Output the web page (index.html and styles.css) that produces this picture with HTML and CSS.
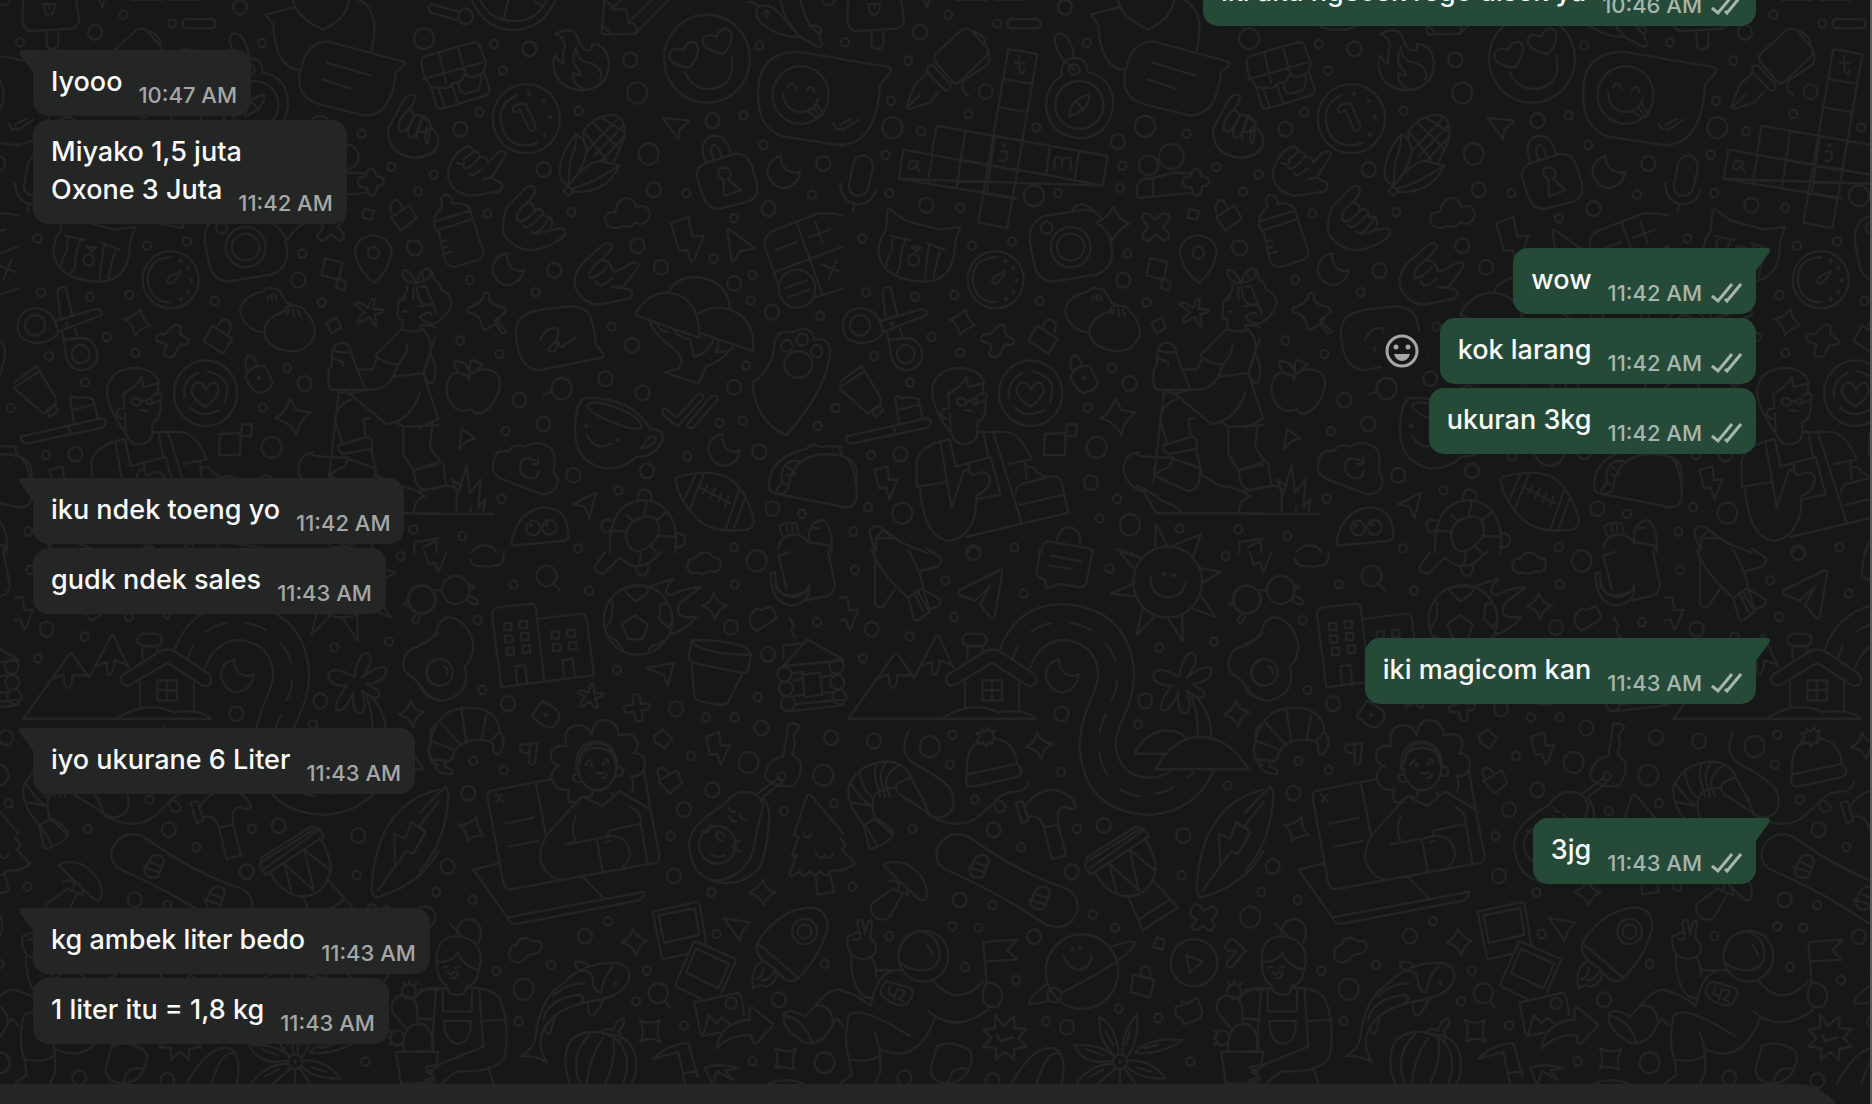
FILE: index.html
```html
<!DOCTYPE html>
<html lang="jv">
  <head>
    <meta charset="UTF-8" />
    <meta name="viewport" content="width=device-width, initial-scale=1.0" />
    <title>Chat</title>
    <link rel="stylesheet" href="styles.css">
  </head>
  <body>
    <svg class="wallpaper" aria-hidden="true">
      <defs>
        <!-- one wallpaper tile, 825px wide, drawn in four quarters -->
        <g id="tile">
          <g transform="translate(420 0) scale(.3333 .352)">
            <circle class="s" cx="222" cy="125"/><circle class="s" cx="249" cy="200"/><circle class="s" cx="178" cy="319"/><circle class="s" cx="476" cy="315"/><circle class="s" cx="41" cy="496"/><circle class="s" cx="202" cy="607"/><circle class="s" cx="454" cy="603"/><circle class="s" cx="150" cy="795"/><circle class="s" cx="347" cy="830"/><circle class="s" cx="575" cy="928"/><circle class="s" cx="121" cy="967"/><circle class="s" cx="238" cy="1006"/><circle class="s" cx="257" cy="1225"/><circle class="s" cx="595" cy="1393"/><circle class="s" cx="245" cy="1417"/><circle class="s" cx="127" cy="1523"/><circle class="s" cx="802" cy="1297"/><circle class="s" cx="899" cy="1201"/><circle class="s" cx="969" cy="1195"/><circle class="s" cx="978" cy="1039"/><circle class="s" cx="992" cy="854"/><circle class="s" cx="998" cy="781"/><circle class="s" cx="881" cy="735"/><circle class="s" cx="942" cy="620"/><circle class="s" cx="799" cy="549"/><circle class="s" cx="1018" cy="130"/><circle class="s" cx="971" cy="328"/><circle class="s" cx="1030" cy="412"/><circle class="s" cx="1176" cy="553"/><circle class="s" cx="1201" cy="897"/><circle class="s" cx="1193" cy="1210"/><circle class="s" cx="1247" cy="1159"/><circle class="s" cx="1146" cy="1460"/><circle class="s" cx="942" cy="1555"/><circle class="s" cx="474" cy="1558"/>
            <circle class="m" cx="328" cy="139"/><circle class="m" cx="631" cy="170"/><circle class="m" cx="121" cy="367"/><circle class="m" cx="371" cy="482"/><circle class="m" cx="878" cy="343"/><circle class="m" cx="701" cy="539"/><circle class="m" cx="652" cy="698"/><circle class="m" cx="723" cy="759"/><circle class="m" cx="403" cy="768"/><circle class="m" cx="1046" cy="593"/><circle class="m" cx="1210" cy="464"/><circle class="m" cx="942" cy="805"/><circle class="m" cx="1056" cy="887"/><circle class="m" cx="636" cy="981"/><circle class="m" cx="556" cy="1076"/><circle class="m" cx="668" cy="1116"/><circle class="m" cx="942" cy="1100"/><circle class="m" cx="298" cy="1137"/><circle class="m" cx="370" cy="1204"/><circle class="m" cx="460" cy="1350"/><circle class="m" cx="681" cy="1338"/><circle class="m" cx="1018" cy="1283"/><circle class="m" cx="1057" cy="1445"/><circle class="m" cx="1225" cy="-6"/>
            <circle class="l" cx="652" cy="264"/><circle class="l" cx="686" cy="437"/><circle class="l" cx="425" cy="1104"/><circle class="l" cx="12" cy="110"/>
            <!-- scooter wheel, pencil, chilli -->
            <path d="M150-10Q190 85 280 85T412-10M175-10Q205 58 280 60T385-10M265 0L250 55M35 12L120 34M32 36L115 58M35 12Q18 20 32 36M345 5L370 18"/><ellipse cx="137" cy="47" rx="22" ry="22"/>
            <path d="M553 0L545 88Q545 98 556 98L645 96L750-5M645 96Q655 80 640 66Q622 70 622 55Q630 25 600 25Q575 35 575 15L553 0M625 65L700-5M548 72L572 95M580 22L602 0"/>
            <path d="M985 5Q1005 5 1015 20Q1050 5 1080 40L1140 105Q1070 105 1025 65Q1000 45 1015 20M1030 40q8-15 18-5q-12 10-8 18M1082-5Q1085 50 1140 105L1195 133Q1207 135 1205 122L1197 98Q1150 60 1142-5M1165 72Q1200 70 1204 86Q1200 98 1190 92"/>
            <!-- gift basket, flame, clock -->
            <path d="M20 158L160 120Q180 120 180 135L198 178Q195 210 170 215Q150 225 135 210Q125 240 100 235Q85 255 65 248Q35 255 25 235Q5 210 5 175Q5 162 20 158M10 225L195 175M58 152L78 235M115 138L138 212M35 250L48 298Q55 312 70 308L195 272Q210 268 208 250L192 205M55 252L75 306M95 238L115 295M115 235Q118 270 140 265L170 258Q185 250 182 215"/>
            <path d="M405 97Q460 70 475 110Q485 145 508 143Q520 140 515 125Q560 125 567 180Q565 250 485 257Q405 250 400 180Q402 160 408 158Q412 175 432 180Q425 160 435 130Q430 100 405 97ZM468 135Q470 175 515 180Q555 200 540 225M468 135Q450 170 468 190Q482 205 482 213Q470 215 460 207Q455 240 495 255"/>
            <ellipse cx="319" cy="337" rx="101" ry="98"/><path d="M290 270Q240 290 242 340Q250 415 322 413Q340 412 353 405M280 318Q275 300 295 297Q315 290 320 300L346 355Q345 375 330 372L300 312Q290 322 280 318"/><circle class="dot" cx="327" cy="266"/><circle class="dot" cx="371" cy="287"/><circle class="dot" cx="391" cy="333"/><circle class="dot" cx="375" cy="383"/>
            <!-- heart eyes -->
            <ellipse cx="861" cy="167" rx="129" ry="125"/><path d="M935 160Q950 240 875 253Q815 255 795 205M810 192Q750 185 748 160Q750 130 790 142Q800 115 825 120Q850 140 810 192ZM910 154Q850 140 848 118Q850 90 890 105Q900 75 925 82Q950 110 910 154Z"/>
            <!-- laughing bubble -->
            <path d="M1270 168L1140 148Q1030 145 1017 235Q1000 360 1090 388L1270 414M1240 350L1252 368L1265 365"/><ellipse cx="1142" cy="270" rx="84" ry="82"/><path d="M1090 262Q1092 315 1140 318Q1185 318 1193 280M1104 248Q1115 225 1130 252M1160 258Q1175 235 1183 262M1168 318Q1195 345 1210 325L1190 295M1180 305L1195 325"/>
            <!-- corn -->
            <path d="M500 420Q485 390 492 370Q515 340 550 330Q590 320 605 340Q620 370 610 400L582 458M468 382Q415 440 420 500Q425 520 445 528Q500 470 500 420Q490 390 468 382ZM468 382Q470 420 450 460L445 528M445 528Q500 460 540 457L598 470Q560 550 460 545L445 528M460 535Q520 520 598 470M430 543L445 528L460 543L447 557ZM492 375L560 455M520 350L600 425M545 335L612 375M500 430L590 340M520 445L612 355M545 457L610 390"/>
            <!-- hands -->
            <path d="M205 462L235 432Q255 425 258 440L215 505L245 520Q250 540 235 545L150 556Q85 545 83 490Q95 440 135 418Q155 410 160 430Q180 430 180 445Q200 445 205 462M110 462Q140 475 130 455L160 430M130 475Q140 490 180 445M148 490Q150 510 188 478M215 505L190 508"/>
            <path d="M318 578Q345 560 345 535Q335 520 315 535L260 590Q240 650 255 670Q290 715 345 710Q400 700 435 668Q440 650 420 648L388 655Q405 630 388 615Q370 620 370 605Q360 585 345 600Q340 570 318 578Q290 600 290 620Q300 645 345 600M310 640Q320 660 370 605M335 655Q345 680 388 620M345 665L390 655"/>
            <path d="M540 740Q570 715 577 700Q570 685 550 695L485 750Q455 790 468 820Q490 865 540 865L630 848Q645 830 630 822L575 815L610 815L650 765Q665 745 640 745L590 770Q575 775 575 760Q565 735 540 740Q500 770 510 790Q530 790 560 760M528 800Q540 825 575 790"/>
            <path d="M0 330Q20 325 15 340Q35 340 32 365Q55 375 55 405Q50 435 0 448M0 375Q15 380 20 360M20 408Q10 390 22 370L32 368"/>
            <!-- bottle, moons, pin, cloud -->
            <path d="M65 590Q70 580 62 570Q65 550 85 555Q95 560 98 578Q140 575 150 595L158 622L50 655Q40 640 42 630Q45 605 65 590M48 628L152 598M55 655L75 740Q85 760 105 758L175 738Q190 732 190 715L158 622M62 687L80 683M65 703L82 700M70 722L97 715"/>
            <path d="M262 720Q220 725 218 770Q230 810 270 810Q305 800 312 768Q285 775 270 755Q258 740 262 720ZM1083 442Q1040 455 1043 495Q1060 535 1095 535Q1135 525 1141 488Q1120 495 1100 482Q1078 465 1083 442ZM908 1233Q865 1240 865 1280Q880 1325 920 1323Q955 1315 960 1280Q930 1290 915 1270Q905 1255 908 1233Z"/>
            <path d="M192 835Q205 825 208 840Q200 860 240 870Q260 875 257 887L225 910L260 942Q255 950 245 945L225 920L200 935Q190 942 187 930Q180 890 145 888Q140 880 145 875Q190 860 192 835M238 908L225 918"/>
            <path d="M585 603Q595 560 625 563Q648 570 648 590Q685 575 690 610Q680 645 645 632Q630 650 610 642Q560 660 555 620Q560 600 585 603Z"/>
            <!-- padlock -->
            <path d="M858 463Q825 475 833 510L850 560Q865 598 905 592L985 572Q1020 560 1010 520L995 470Q980 435 945 437ZM858 463Q830 400 880 385Q920 385 933 438M882 458Q865 415 885 412Q895 412 905 448M910 510Q885 495 900 478Q925 470 933 492Q930 508 922 508L962 540L912 557L910 510"/>
            <!-- bolt, cursors -->
            <path d="M753 635L805 616L817 673L852 668L822 740Q815 750 812 740L802 710L777 712ZM922 655Q925 648 932 655L1007 706L962 712L940 742Q935 748 935 740ZM728 335L805 342Q810 348 800 350L777 370L775 395ZM460 1432L528 1400L508 1472L495 1440ZM126 1218L165 1245L138 1255L117 1275Z"/>
            <!-- calculator -->
            <path d="M1270 612Q1200 600 1185 610L1060 655Q1030 670 1035 700L1075 810M1130 632L1208 838M1067 772L1270 700M1068 710L1130 687M1165 675L1230 652M1187 632L1208 692M1205 752L1260 772M1250 738L1225 795M1185 845L1270 820M1097 818L1160 797M1107 844L1168 823"/><ellipse cx="1131" cy="820" rx="55" ry="54"/>
            <!-- gnome hat -->
            <path d="M0 870L35 865M0 815L18 813L50 890M0 900Q30 880 35 895M10 790Q0 770 20 763Q40 765 42 795Q60 800 62 822Q95 835 95 865Q80 905 40 920Q15 920 0 900M0 930Q35 950 32 1000L10 1060L55 1190L0 1215M32 1005Q55 1050 40 1085Q30 1090 20 1080M37 1205L30 1270L60 1310L0 1330M60 1310Q75 1315 73 1345L80 1380L0 1395M80 1380Q110 1380 110 1400V1458M0 1460H220M140 1320L115 1400L95 1362L125 1380M140 1320L150 1400L182 1362L175 1440L197 1415L190 1455M152 1440V1458"/>
            <!-- number bubble, mushroom -->
            <path d="M450 870Q330 880 310 897Q280 920 290 970Q300 1050 360 1052L545 1016Q555 1010 545 1000L528 980Q520 900 500 885Q480 870 450 870M360 965Q380 925 412 933Q425 960 385 990Q390 1005 405 995Q425 970 410 970Q395 975 430 985L440 975L467 960"/>
            <path d="M645 895Q680 830 745 832Q840 840 838 960L645 895M745 832Q770 785 830 787Q920 795 930 875M838 890Q870 870 910 875Q1005 890 1000 998L838 945M690 915Q700 945 760 990Q800 1020 775 1048L735 1058L835 1090L860 1040Q900 1030 940 985M760 935Q770 955 810 965L822 1015Q870 1000 882 962M712 920Q720 945 745 942M888 1000Q895 985 895 968M888 1000Q930 1000 940 985"/>
            <!-- paw -->
            <path d="M998 1085Q1060 1050 1065 970Q1075 935 1115 945Q1130 935 1160 935Q1185 945 1180 965Q1240 955 1228 1020Q1210 1120 1098 1237Q1000 1190 998 1085"/><ellipse cx="1135" cy="1035" rx="42" ry="38"/><circle class="p" cx="1147" cy="965"/><circle class="p" cx="1100" cy="983"/><circle class="p" cx="1190" cy="998"/>
            <!-- apple, cup, ticks -->
            <path d="M145 1080L150 1062Q190 1040 220 1055Q250 1070 235 1115Q215 1165 180 1175Q160 1175 155 1163Q140 1168 120 1167Q80 1150 80 1100Q85 1060 115 1058Q140 1060 150 1075M150 1065Q140 1020 102 1027Q105 1065 145 1068M150 1055Q145 1025 160 1023L188 1035L160 1060M370 1122L395 1113"/>
            <path d="M470 1170Q480 1130 500 1130Q640 1130 690 1220Q730 1215 728 1250Q705 1300 650 1297Q610 1335 550 1330Q460 1310 465 1210ZM502 1150Q520 1135 580 1155Q660 1180 667 1215Q640 1225 580 1200Q500 1170 502 1150M500 1235Q525 1285 575 1260M690 1240L708 1243Q700 1270 662 1275ZM728 1165Q740 1155 745 1168L770 1185L835 1120Q850 1115 850 1130L775 1210Q765 1210 728 1175ZM802 1205L875 1125Q895 1120 893 1135L820 1215Q805 1220 802 1205"/><circle class="dot" cx="499" cy="1210"/><circle class="dot" cx="592" cy="1250"/>
            <!-- cloud sync, ghost, turtle -->
            <path d="M232 1286Q215 1310 220 1340Q230 1355 250 1363L370 1405Q410 1400 413 1370Q412 1350 400 1340Q410 1300 395 1275Q355 1245 315 1270Q280 1255 268 1282Q245 1280 232 1286M345 1308Q300 1290 300 1332Q310 1365 345 1358Q355 1350 357 1338M355 1300V1318H338M280 1550Q270 1550 278 1525Q300 1450 370 1442Q445 1440 445 1525Q445 1535 430 1537ZM10 1555L48 1535L50 1570M155 1568Q180 1545 195 1550Q220 1548 228 1570"/><circle class="m" cx="339" cy="1500"/><circle class="m" cx="388" cy="1498"/><circle class="dot" cx="332" cy="1493"/><circle class="dot" cx="380" cy="1490"/>
            <path d="M570 1570Q565 1450 640 1425Q700 1410 740 1450Q780 1500 765 1570M655 1425Q650 1390 675 1390Q700 1395 693 1425M572 1478Q540 1470 545 1500Q555 1520 572 1508M765 1515Q800 1515 795 1540Q785 1560 765 1552M618 1520Q620 1490 650 1475Q690 1460 708 1475Q725 1500 710 1530Q680 1565 650 1567Q620 1560 618 1520M640 1482L620 1462M672 1465L680 1425M708 1480L740 1455M718 1523L765 1525M690 1550L710 1570M618 1510L570 1507"/>
            <!-- football, taco -->
            <path d="M768 1370Q765 1355 780 1353Q880 1330 930 1360Q985 1400 1002 1480Q1000 1500 980 1505Q880 1515 840 1480Q780 1430 768 1370M825 1352L790 1425M852 1345L808 1450M958 1390L915 1508M975 1415L940 1505M840 1385L930 1430M862 1380L850 1400M885 1388L870 1415M905 1400L895 1425M925 1412L915 1440"/>
            <path d="M1048 1390Q1040 1300 1160 1275Q1180 1255 1200 1270Q1230 1265 1265 1270M1270 1295Q1120 1270 1105 1385Q1100 1400 1080 1403Q1055 1405 1048 1390M1270 1440L1080 1405M1140 1310Q1080 1300 1085 1370L1105 1380M1100 1325Q1125 1340 1125 1350M1100 1350h15M1068 1395L1085 1372M1075 1560Q1080 1525 1110 1520Q1150 1515 1168 1545M1085 1520L1078 1495Q1100 1480 1130 1487L1135 1515M1098 1487L1103 1512M1115 1485L1118 1512M1168 1545Q1160 1480 1210 1477Q1240 1500 1235 1570M1168 1540L1230 1550L1225 1570M1180 1500h20"/>
          </g>

          <g transform="translate(840 0) scale(.3333 .352)">
            <circle class="s" cx="325" cy="42"/><circle class="s" cx="472" cy="67"/><circle class="s" cx="205" cy="172"/><circle class="s" cx="741" cy="122"/><circle class="s" cx="15" cy="120"/><circle class="s" cx="153" cy="286"/><circle class="s" cx="385" cy="324"/><circle class="s" cx="243" cy="373"/><circle class="s" cx="589" cy="362"/><circle class="s" cx="137" cy="440"/><circle class="s" cx="148" cy="548"/><circle class="s" cx="361" cy="590"/><circle class="s" cx="654" cy="548"/><circle class="s" cx="840" cy="534"/><circle class="s" cx="847" cy="471"/><circle class="s" cx="1040" cy="380"/><circle class="s" cx="1129" cy="474"/><circle class="s" cx="1209" cy="544"/><circle class="s" cx="516" cy="686"/><circle class="s" cx="396" cy="698"/><circle class="s" cx="67" cy="677"/><circle class="s" cx="862" cy="721"/><circle class="s" cx="343" cy="838"/><circle class="s" cx="599" cy="855"/><circle class="s" cx="920" cy="859"/><circle class="s" cx="225" cy="843"/><circle class="s" cx="78" cy="831"/><circle class="s" cx="275" cy="957"/><circle class="s" cx="361" cy="1002"/><circle class="s" cx="102" cy="1012"/><circle class="s" cx="210" cy="1086"/><circle class="s" cx="816" cy="1045"/><circle class="s" cx="743" cy="1158"/><circle class="s" cx="93" cy="1293"/><circle class="s" cx="831" cy="1417"/><circle class="s" cx="84" cy="1441"/><circle class="s" cx="779" cy="1473"/><circle class="s" cx="1019" cy="1502"/><circle class="s" cx="1195" cy="1504"/><circle class="s" cx="40" cy="1510"/><circle class="s" cx="523" cy="1555"/>
            <circle class="m" cx="240" cy="92"/><circle class="m" cx="437" cy="260"/><circle class="m" cx="834" cy="402"/><circle class="m" cx="675" cy="20"/><circle class="m" cx="259" cy="583"/><circle class="m" cx="850" cy="796"/><circle class="m" cx="869" cy="1089"/><circle class="m" cx="181" cy="1290"/><circle class="m" cx="753" cy="1371"/>
            <circle class="l" cx="157" cy="363"/><circle class="l" cx="915" cy="359"/><circle class="l" cx="582" cy="556"/><circle class="l" cx="770" cy="1271"/><circle class="l" cx="187" cy="1458"/><circle class="l" cx="870" cy="1491"/>
            <!-- lolly, pen -->
            <path d="M25-5L22 55Q25 90 55 88L160 82Q195 80 192 50L182-5M95 88V130Q110 150 130 130V85M82 12L122 10M88 12Q85 42 103 42Q120 40 118 12M103 15V25M250-5L262 22L268-5M350 0H440M465 0H555M512 54H590Q602 58 602 68Q600 80 590 80H512Q503 78 503 67Q503 56 512 54"/>
            <path d="M290 150L365 85Q380 75 395 88L440 135Q448 150 438 160L355 235Q345 240 335 230L285 175Q278 160 290 150M400 88Q425 95 435 115V130M445 140Q455 170 440 185L370 230Q360 260 385 270M262 195Q260 185 278 185L332 240Q330 260 315 257L262 205ZM260 210L225 240L200 300Q205 315 215 308L270 290L298 258M205 303L240 270"/>
            <!-- crossword -->
            <path d="M505 139L592 154L502 648L415 632ZM290 357L803 443L788 527L176 508L190 425L278 440L262 523M176 508L530 563M290 357L275 440L620 497L788 527M492 225L577 238M478 305L562 319M376 372L350 535M464 388L440 550M548 400L530 487M630 417L618 497M717 432L703 515M190 425L535 485M432 550L517 563M275 440L448 468M537 160Q535 210 548 210L553 200M525 178L553 180M235 460Q205 450 205 475Q215 490 232 465V480L240 487M483 430H500V450Q490 465 480 455M643 480V455Q655 435 665 455V475Q665 440 690 450L695 480"/><circle class="dot" cx="493" cy="413"/>
            <!-- compass -->
            <ellipse cx="718" cy="298" rx="72" ry="68"/><ellipse cx="703" cy="198" rx="16" ry="15"/><path d="M665 216Q660 170 700 165Q745 165 742 205Q820 220 820 300Q805 390 720 393Q625 385 618 300Q620 240 665 216M703 198Q640 150 645 105Q655 85 680 105Q700 130 702 165M690 330Q685 285 748 268Q750 310 690 330M705 285L732 312"/>
            <!-- chat bubbles -->
            <path d="M833-5Q840 50 925 84Q1000 50 1003-5M838 20L752 42L775 70Q780 190 850 198M1020-5Q1100 20 1070 143M870 160Q890 120 940 118L1165 175Q1175 180 1165 187L1143 205Q1130 330 1050 328L920 298Q840 280 855 205ZM936 178L1068 215M924 226L1006 251"/>
            <path d="M0 168L145 190Q158 195 150 208L120 240Q110 410 0 412M0 355L12 348L35 338M8 370L55 340"/>
            <!-- thumb, people -->
            <path d="M1200 270Q1180 265 1165 285L1120 365Q1115 440 1200 448Q1240 445 1260 430M1200 272Q1200 295 1178 315Q1145 340 1152 370Q1175 385 1198 330Q1170 375 1185 392Q1210 390 1222 335Q1195 385 1210 395M1178 315Q1195 310 1198 330Q1215 320 1222 335Q1245 330 1245 360L1240 405"/>
            <ellipse cx="994" cy="445" rx="37" ry="35"/><ellipse cx="926" cy="470" rx="29" ry="28"/><path d="M890 552Q885 505 935 507L1000 490L1050 492M890 552Q890 562 905 562L1050 548M940 510V560M1055 495Q1055 478 1070 480Q1085 485 1082 500Q1105 500 1107 515Q1105 530 1088 528Q1085 555 1070 557Q1055 550 1057 533Q1030 535 1028 515Q1030 500 1050 503Z"/>
            <!-- microphone -->
            <path d="M38 470Q45 440 75 442Q100 450 98 480L85 535Q75 560 45 555Q25 545 27 525ZM0 520Q5 575 50 580Q95 580 107 540M42 582L38 603"/>
            <!-- crying cat, gauge -->
            <path d="M143 598Q148 590 155 598L198 627L298 652L360 645L345 690Q345 790 265 800Q130 800 115 720Q115 680 138 655ZM150 670L210 682M160 680Q150 690 158 710Q140 730 140 755M195 685Q180 720 180 760L170 775M260 690L313 710M268 697Q258 740 255 790M300 715Q290 745 280 790M215 700L243 703L230 715Z"/><ellipse cx="221" cy="738" rx="16" ry="16"/>
            <ellipse cx="467" cy="795" rx="84" ry="81"/><path d="M467 731Q395 735 398 800Q410 860 467 859M497 770Q500 775 475 800Q465 810 457 803Q455 795 465 785Z"/><circle class="dot" cx="497" cy="741"/><circle class="dot" cx="520" cy="763"/><circle class="dot" cx="530" cy="796"/><circle class="dot" cx="520" cy="828"/><circle class="dot" cx="498" cy="850"/>
            <!-- camera -->
            <path d="M782 618Q760 590 730 597L620 612Q565 625 570 690L585 760Q600 800 645 799L770 780Q825 760 815 700L810 680M697 597Q710 575 735 582Q755 590 757 600M820 585L840 622L868 635Q835 650 817 683Q800 650 768 632Q805 620 820 585Z"/><ellipse cx="692" cy="702" rx="60" ry="57"/><ellipse cx="692" cy="702" rx="41" ry="38"/><circle class="p" cx="620" cy="647"/>
            <path d="M905 620Q910 600 930 610L945 625L965 608Q985 600 990 620L968 645L988 665Q985 685 970 683L948 665L925 685Q905 680 907 668L925 645ZM930 733L982 745L972 795L920 782ZM968 790L993 800L988 825L963 818ZM1048 592L1077 600L1070 625L1042 618ZM1180 685H1212L1223 705L1212 725H1188L1175 705ZM1128 618L1183 583L1205 620L1157 655ZM1130 605Q1120 580 1140 568Q1155 568 1162 592"/>
            <path d="M1075 668Q1020 675 1020 720Q1030 770 1077 804Q1125 765 1130 715Q1125 675 1075 668Z"/><circle class="p" cx="1075" cy="718"/>
            <path d="M935 918L965 902L978 930L950 948ZM1060 875Q1070 840 1080 850L1075 878L1105 880Q1110 890 1080 892L1085 925Q1075 930 1065 900L1030 917Q1020 910 1050 887L1020 865Q1025 850 1060 875"/>
            <!-- fidget, dumplings -->
            <path d="M120 912L245 878Q265 880 260 895L130 942Q120 970 60 975Q5 965 8 925Q15 875 65 875Q105 880 120 912L130 942M138 908L127 830Q130 810 152 818L172 893M142 945Q145 970 150 990Q155 1050 200 1052Q248 1045 247 1005Q240 960 195 960L145 965M180 935L187 960"/><ellipse cx="60" cy="924" rx="30" ry="29"/><ellipse cx="197" cy="1006" rx="27" ry="26"/><circle class="dot" cx="155" cy="920"/>
            <path d="M745 828Q760 812 770 820Q790 820 795 828L815 860L840 870M745 828Q680 840 675 885Q690 940 748 945M810 880Q820 865 835 868Q865 870 870 885Q900 910 900 950Q880 998 830 998Q750 990 748 940Q755 895 815 885M762 840l-5 12M770 838v15M780 838l5 15M822 880l-5 15M835 880l2 18M848 880l8 20"/>
            <!-- sparkle, plus, luggage tags -->
            <path d="M376 878Q380 905 405 925Q380 930 360 952Q355 920 328 907Q360 900 376 878ZM470 930Q485 915 497 928L495 948L520 965Q525 985 495 978L478 1010Q455 1020 447 1005L455 980L425 968Q420 945 450 950ZM592 925L652 962L625 1005L565 968ZM610 925Q615 905 635 908Q655 920 642 945M700 1055Q720 1035 750 1040L773 1085Q770 1110 730 1117Q700 1100 692 1070ZM695 1050Q685 1020 700 1010Q720 1010 725 1038M825 1133L845 1165L888 1172Q850 1195 845 1235Q825 1200 782 1188Q815 1170 825 1133Z"/><circle class="dot" cx="732" cy="1074"/>
            <path d="M614 1233L677 1230L675 1292L612 1293ZM682 1204L711 1206L708 1240L677 1238Z"/>
            <!-- toothpaste, brush -->
            <path d="M0 1085L65 1040L122 1130Q125 1150 110 1160L85 1175L0 1105M0 1100L72 1055M95 1165L120 1150L130 1165L105 1185ZM18 1240L260 1188Q275 1190 272 1205L262 1215L35 1260Q15 1255 18 1240M160 1210L168 1235M178 1205L165 1130Q170 1120 180 1130Q220 1125 235 1135L248 1188M172 1165L235 1150"/>
            <!-- man with glasses, heart badge -->
            <path d="M328 1225Q270 1150 277 1100Q290 1045 370 1045Q425 1055 432 1088L385 1100L380 1070Q365 1100 325 1118L328 1160Q300 1160 305 1180L320 1190M330 1175L332 1230Q345 1262 370 1263Q410 1260 412 1228V1200Q440 1190 437 1140M430 1095L428 1120M350 1142Q350 1130 365 1130Q380 1135 378 1148Q360 1160 350 1142M395 1140Q400 1130 410 1133V1148Q395 1150 395 1140M378 1140L395 1138M410 1125Q435 1110 442 1125Q440 1140 410 1145M375 1165L398 1168"/>
            <ellipse cx="572" cy="1117" rx="95" ry="93"/><path d="M572 1155Q530 1135 530 1105Q540 1080 562 1090L573 1107Q590 1080 605 1090Q625 1120 572 1155M548 1060Q500 1080 508 1130M578 1055Q640 1070 637 1110L630 1145M525 1158Q560 1190 612 1165"/>
            <path d="M328 1247Q240 1265 230 1310V1380L240 1383Q250 1530 330 1537Q410 1520 410 1410M230 1383L318 1370M302 1260L335 1443L365 1355Q370 1330 388 1335L385 1315L452 1298L482 1405L412 1418M330 1250L347 1325L388 1315M388 1335Q390 1355 405 1348Q440 1330 450 1360Q450 1390 410 1408M412 1227H500Q545 1235 575 1305L505 1318M430 1227L445 1300M458 1225L545 1485M378 1525L685 1457L665 1370Q655 1350 635 1353L545 1375Q525 1385 528 1400M538 1435L670 1405M555 1312L560 1360M560 1330Q580 1320 590 1340L615 1355"/>
            <!-- cap, lamp -->
            <path d="M0 1295Q45 1300 50 1340V1415Q45 1440 20 1441H0M0 1275L5 1295M20 1300Q45 1330 48 1380M103 1335L143 1325L147 1363L173 1362L148 1418L138 1385L117 1387ZM88 1510Q100 1485 125 1500L185 1542L260 1570M88 1510L105 1568M110 1560Q95 1520 150 1530M105 1530L130 1505L160 1530M605 1568Q605 1540 625 1538L750 1558L758 1570M650 1540Q655 1500 688 1497Q725 1505 720 1545M385 1568Q400 1540 420 1568M830 1560L880 1572M945 1550L948 1490L985 1555L1082 1518L1065 1570M1198 1570V1540L1270 1530"/>
            <!-- girl with scooter -->
            <path d="M1205 805Q1160 800 1162 770Q1175 755 1205 805Q1215 760 1240 765Q1265 790 1205 805M1178 810Q1180 835 1150 855L1148 900Q1155 910 1165 910L1160 935L1080 1010Q1110 1035 1150 1035Q1175 1010 1178 980M1160 935Q1190 945 1215 940V925Q1240 920 1260 930M1165 885h10M1160 855Q1165 845 1175 845M1205 815Q1210 870 1240 865M1195 815V850M1085 1020L1072 1050H1025M1150 1035L1135 1070Q1115 1105 1075 1107H950Q935 1095 942 1048L950 1040L952 1000Q955 975 985 973Q1010 980 1010 1010L1052 1107M955 995Q980 1005 1008 1000M950 1015L985 1030V1040M1135 1070L1225 1060L1245 1000L1260 960M1225 1060L1240 1090M972 1112L940 1370M972 1112L1000 1115L1115 1205Q1190 1195 1215 1115M1000 1120L1050 1107M1010 1135Q965 1150 960 1190L980 1255M1045 1190L1052 1240M1045 1190L1065 1188M1140 1198L1165 1212L1270 1208M1165 1212V1290L1195 1335L1270 1320M1195 1335L1202 1370Q1215 1395 1240 1390L1270 1385M970 1265L1060 1240Q1075 1250 1070 1275L985 1290Q970 1285 970 1265M990 1300L1080 1330Q1085 1390 1045 1395L945 1352Q950 1340 990 1325L1000 1300Q870 1300 895 1285Q850 1290 850 1340Q870 1390 910 1395L950 1458H1270M1070 1280L1085 1350L1140 1380Q1200 1385 1230 1410Q1195 1420 1197 1458M890 1380Q930 1395 970 1425Q1010 1435 1025 1457"/>
          </g>

          <g transform="translate(420 552) scale(.3333 .352)">
            <circle class="s" cx="281" cy="92"/><circle class="s" cx="507" cy="110"/><circle class="s" cx="173" cy="194"/><circle class="s" cx="187" cy="392"/><circle class="s" cx="591" cy="335"/><circle class="s" cx="944" cy="92"/><circle class="s" cx="1191" cy="199"/><circle class="s" cx="1013" cy="412"/><circle class="s" cx="858" cy="470"/><circle class="s" cx="944" cy="470"/><circle class="s" cx="813" cy="579"/><circle class="s" cx="160" cy="593"/><circle class="s" cx="251" cy="619"/><circle class="s" cx="752" cy="807"/><circle class="s" cx="1092" cy="736"/><circle class="s" cx="1242" cy="714"/><circle class="s" cx="49" cy="966"/><circle class="s" cx="158" cy="988"/><circle class="s" cx="874" cy="967"/><circle class="s" cx="564" cy="1049"/><circle class="s" cx="393" cy="1173"/><circle class="s" cx="229" cy="1190"/><circle class="s" cx="681" cy="1189"/><circle class="s" cx="890" cy="1085"/><circle class="s" cx="1214" cy="1170"/><circle class="s" cx="648" cy="1276"/><circle class="s" cx="296" cy="1333"/><circle class="s" cx="792" cy="1345"/><circle class="s" cx="998" cy="1447"/>
            <circle class="m" cx="264" cy="431"/><circle class="m" cx="933" cy="214"/><circle class="m" cx="1044" cy="290"/><circle class="m" cx="768" cy="446"/><circle class="m" cx="1024" cy="500"/><circle class="m" cx="877" cy="676"/><circle class="m" cx="792" cy="732"/><circle class="m" cx="145" cy="685"/><circle class="m" cx="83" cy="893"/><circle class="m" cx="762" cy="920"/><circle class="m" cx="495" cy="1091"/><circle class="m" cx="1077" cy="1272"/><circle class="m" cx="1233" cy="527"/>
            <circle class="l" cx="1010" cy="25"/><circle class="l" cx="986" cy="598"/><circle class="l" cx="1210" cy="634"/><circle class="l" cx="311" cy="1242"/><circle class="l" cx="1214" cy="1451"/>
            <!-- bolt, clouds, glasses -->
            <path d="M15 0L25 35L45 30L55 58L80 0M150 20Q155 45 190 40Q210 45 225 38Q255 40 250 0M400 90L420 108"/><ellipse cx="380" cy="68" rx="30" ry="29"/>
            <ellipse cx="107" cy="108" rx="41" ry="40"/><ellipse cx="5" cy="135" rx="42" ry="40"/><path d="M46 108L66 110M145 98Q165 90 160 105H148M140 135L150 125Q180 135 172 148Q155 150 140 135"/>
            <path d="M525 40Q520 60 550 62L600 15Q640 55 690 30L725 0M648 40Q645 65 670 68Q690 55 682 35M525 40L555 0M663 0L657 40M802 40Q805 15 825 18Q840-5 870 5Q880 20 900 20Q910 55 880 57Q870 50 865 58Q845 65 835 58Q805 65 802 40Z"/>
            <path d="M1075 10L1100 105M1075 10L1110 0M1225 0L1245 95Q1240 120 1220 125L1160 137M1052 60L1065 58Q1065 130 1125 128Q1160 120 1168 95Q1170 150 1110 152Q1050 140 1052 60M1065 95Q1090 140 1150 115"/>
            <!-- egg, tower block -->
            <path d="M0 262Q45 250 55 210Q70 180 100 187Q155 210 160 270Q155 310 135 325Q145 370 125 395Q90 425 60 422Q20 415 0 385M70 325Q85 330 83 345"/><ellipse cx="58" cy="342" rx="40" ry="38"/>
            <path d="M244 384L216 180Q215 162 230 158L330 147Q345 147 347 160L373 362M354 190L485 175Q497 175 500 190L522 350L244 384M292 378L286 325L315 321L322 373M432 357L427 308L457 303L464 352M252 202h22v20h-22zM299 196h22v20h-22zM255 237h22v20h-22zM303 230h22v20h-22zM260 272h22v20h-22zM308 266h22v20h-22zM395 226h22v20h-22zM442 221h22v20h-22zM399 261h22v20h-22zM447 256h22v20h-22z"/>
            <!-- flaming ball -->
            <ellipse cx="654" cy="193" rx="103" ry="99"/><path d="M645 180L683 206L668 248H625L607 205ZM612 105Q620 120 647 140Q685 120 687 103Q650 90 612 105M570 140L578 145L575 190L558 215M740 145L722 148L717 190L745 215L755 200M570 240Q600 255 612 285M685 285Q690 260 720 262L730 250M690 98L760 75Q720 120 755 122Q800 100 842 100L780 145Q755 195 830 183Q800 220 750 235"/>
            <path d="M881 115Q890 145 922 152Q895 160 886 190Q875 160 845 153Q875 145 881 115ZM990 180L1010 160L1025 165L1050 155Q1070 170 1068 190L1010 224Q985 210 990 180ZM677 330L762 315L743 380L732 350ZM1108 187L1122 210Q1105 220 1128 245"/>
            <!-- plant pot, log cabin -->
            <path d="M815 250Q985 250 993 292L985 335Q980 345 965 343L820 315Q805 310 807 295ZM815 255Q850 290 993 292M815 312L822 405Q825 420 845 425L900 434Q920 435 925 425L968 345"/>
            <path d="M1092 322L1162 248L1270 305M1090 300V265L1145 260M1100 323L1270 308M1115 345L1150 340L1145 360M1120 365L1147 362M1147 348L1200 342L1208 405L1155 413ZM1200 355L1235 350M1120 410L1155 405M1205 400L1240 398M1125 432L1270 420M1115 452L1270 435"/><circle class="m" cx="1093" cy="347"/><circle class="m" cx="1098" cy="388"/><circle class="m" cx="1104" cy="431"/><circle class="m" cx="1250" cy="325"/><circle class="m" cx="1252" cy="370"/><circle class="m" cx="1258" cy="412"/>
            <!-- croissant, tag, star, plus -->
            <path d="M50 590Q25 595 27 560Q35 490 85 455Q130 435 190 447Q240 470 238 510Q265 540 235 575Q215 575 220 545Q205 530 150 535Q100 550 98 585Q85 600 70 592L50 590M42 592Q45 635 98 630Q100 615 75 610L72 595M35 537L98 560M63 487L125 550M123 443L140 545M198 465L185 535M238 510L215 535M335 465L368 422L408 447Q425 465 415 480L398 497Q380 500 365 490Z"/><circle class="dot" cx="378" cy="463"/>
            <path d="M512 375Q525 370 522 400L548 402Q555 412 525 415L535 440Q525 450 510 425L485 440Q475 435 495 410L475 400Q475 385 505 400ZM637 405Q650 400 660 408L662 432L685 430Q695 440 685 448L665 450L668 475Q660 485 648 478L642 455L617 455Q605 440 620 437L640 433ZM302 548L352 543L345 600Q335 610 328 600L330 572L310 570Q295 560 302 548M330 545L328 572"/>
            <path d="M702 522L728 504L757 530L733 558L705 540ZM858 525L897 512L902 550L928 550L903 605L890 573L870 577ZM715 650L770 620L787 655L750 687ZM718 642Q705 615 725 612Q740 615 745 630"/>
            <!-- video call on laptop -->
            <ellipse cx="532" cy="610" rx="57" ry="67"/><path d="M468 620Q465 540 530 538Q590 540 592 615M480 600Q480 555 535 557Q580 560 585 600M478 635Q460 625 460 645Q470 660 485 650M590 608Q610 610 610 625Q605 640 590 635M497 605Q500 595 510 592M555 588Q565 590 565 600M530 627Q540 632 550 627M547 643Q560 642 560 630"/><circle class="dot" cx="515" cy="606"/><circle class="dot" cx="551" cy="602"/>
            <path d="M450 710Q440 690 448 675Q400 680 395 635Q405 605 420 608Q385 600 395 565Q410 545 440 552Q425 500 470 492Q505 490 515 520Q520 475 560 478Q595 485 595 520Q650 510 652 545Q655 560 640 572Q675 570 675 605Q670 640 635 635Q645 665 635 682M450 710L475 712M518 680L515 695L485 695L380 805Q355 850 362 880Q385 930 430 932M490 695L547 722L600 680L692 732L672 622M575 685L580 690M395 645L215 678Q200 685 203 700L250 940Q255 958 275 958L705 883Q720 880 718 860L692 732M347 655L378 805M227 688L247 708M245 690L230 710M252 772L340 755M265 837L355 821M467 750Q450 790 467 822M438 830L530 815L548 905M530 815L560 808Q625 800 630 860Q625 885 610 892M565 808V792L662 772L682 880M632 725Q665 740 662 772M555 825L570 820M235 885L160 902L262 1038Q270 1058 290 1057L655 990Q670 985 673 965L262 1038M490 925L548 980"/>
            <!-- key, avocado -->
            <path d="M1090 580Q1040 590 1035 640Q1060 670 1120 665Q1150 630 1140 595L1118 575L1125 545L1120 520L1138 500Q1135 485 1105 488L1090 580M1078 640L1010 688M1085 655L1030 695"/><circle class="s" cx="1085" cy="637"/>
            <path d="M975 682Q940 680 910 720Q800 780 808 840Q820 930 890 933Q970 925 1000 850Q1010 790 1030 720Q1015 680 975 682M1030 700Q1055 730 1045 780Q1040 860 1015 900Q960 955 880 935M925 725L935 737L945 738M928 750Q935 768 950 765M957 745Q965 760 978 760M875 860Q895 872 912 862M887 800Q895 825 910 820M890 797Q905 790 915 810M845 790Q850 800 865 795L872 775M940 830L960 818M940 840L960 852M950 835H940"/><ellipse cx="892" cy="832" rx="55" ry="53"/>
            <!-- fir tree, stars -->
            <path d="M1160 695Q1168 683 1178 697L1270 800M1160 695L1122 805L1137 810L1115 865L1130 862L1108 915Q1115 930 1140 905Q1150 935 1170 905Q1185 930 1200 905Q1220 930 1235 905L1270 905M1150 797Q1160 825 1172 803M1187 855Q1205 880 1215 862Q1230 880 1240 858M1188 920L1192 973L1242 965L1228 910M1028 930Q1035 960 1067 967Q1040 975 1031 1005Q1020 975 988 968Q1018 955 1028 930ZM170 753Q170 785 190 805Q155 805 140 823Q145 795 117 775Q150 775 170 753ZM638 1070Q650 1095 682 1105Q655 1115 650 1145Q635 1115 605 1110Q635 1095 638 1070Z"/>
            <path d="M0 740L75 668Q85 668 85 700Q75 830 0 905M0 780L17 795L0 820M0 600L10 615M0 450L12 455"/>
            <!-- photos, rocket -->
            <path d="M698 1022L830 994Q838 995 840 1005L858 1113M698 1022L725 1150Q728 1157 740 1155L800 1142M716 1032L825 1012L838 1088L732 1110ZM820 1110Q825 1105 835 1110L945 1155Q950 1160 945 1167L905 1252M820 1110L767 1225Q765 1232 775 1237L845 1270M828 1127L928 1170L895 1240L798 1195ZM823 1280L955 1252Q965 1255 972 1315M823 1280L842 1370Q845 1376 855 1374L898 1365M850 1370L867 1315L890 1340L905 1322L930 1340"/><ellipse cx="934" cy="1282" rx="17" ry="16"/>
            <path d="M890 1410Q900 1335 990 1328L987 1300Q995 1290 1005 1300L1058 1340Q1060 1348 1050 1355L1010 1395Q998 1398 998 1390L995 1373Q930 1370 890 1410M912 1040L992 1053L968 1075L960 1105ZM660 1330Q690 1345 720 1330Q705 1360 720 1390Q690 1375 663 1390Q675 1360 660 1330ZM1065 1410Q1095 1425 1130 1412Q1112 1440 1122 1470Q1095 1460 1065 1465Q1080 1440 1065 1410Z"/>
            <path d="M1012 1110Q1080 1010 1180 1010Q1225 1020 1222 1070Q1200 1150 1135 1210Q1120 1225 1095 1215L1060 1180Q1000 1150 1012 1110L1135 1210M1025 1165Q990 1180 1000 1240Q1020 1225 1040 1235Q1080 1215 1065 1190M1030 1180Q1035 1200 1010 1215M1060 1195Q1045 1220 1025 1215"/><ellipse cx="1154" cy="1078" rx="37" ry="36"/><ellipse cx="1154" cy="1078" rx="21" ry="20"/>
            <!-- gardener -->
            <path d="M50 1175Q45 1090 110 1092Q180 1095 183 1160L175 1195Q170 1230 140 1232Q140 1258 110 1258Q80 1255 80 1232Q50 1215 50 1165Q100 1165 112 1137Q130 1180 180 1187M90 1055L130 1095M110 1085Q110 1045 150 1042Q185 1050 183 1090L175 1110M68 1180L82 1178M105 1182L118 1178M82 1195Q95 1205 102 1192M95 1210Q112 1212 112 1195M0 1245Q30 1235 80 1240M140 1238Q215 1235 240 1270Q270 1340 255 1430Q235 1480 110 1475Q80 1495 65 1510M48 1245L35 1410M68 1240V1305H155L157 1242M178 1240L190 1405L60 1455L18 1462M0 1325L40 1328M188 1332L260 1328M73 1332H152Q155 1395 112 1397Q72 1390 73 1332M205 1465L220 1510M0 1340Q40 1345 40 1420M0 1420H55L48 1460M18 1465Q15 1480 40 1478M0 1510L40 1500Q45 1485 20 1478"/>
            <!-- fish, pumpkin, cloud -->
            <path d="M302 1432Q350 1410 350 1350Q370 1260 430 1225Q490 1165 590 1167Q640 1180 625 1220Q600 1265 520 1275Q400 1295 370 1360Q350 1400 380 1450Q350 1430 302 1432M465 1165Q490 1160 510 1177M465 1165Q465 1185 485 1190M490 1190Q520 1190 520 1230Q530 1255 545 1250Q545 1215 580 1175M505 1278Q500 1320 520 1317Q540 1300 553 1265M490 1225Q440 1225 400 1260M370 1330Q380 1270 480 1258Q500 1270 480 1280M375 1345Q380 1380 392 1365L405 1320M750 1295L737 1280M268 1140Q270 1115 288 1118Q300 1090 325 1098Q335 1110 360 1105Q375 1130 345 1142Q330 1140 320 1150Q300 1175 275 1160Q265 1155 268 1140Z"/><ellipse cx="715" cy="1253" rx="29" ry="28"/><circle class="dot" cx="586" cy="1226"/>
            <path d="M450 1510Q420 1430 455 1385Q500 1350 560 1370Q635 1370 648 1440Q650 1490 635 1510M480 1510Q445 1430 510 1370M500 1510Q510 1430 550 1380M555 1510Q590 1440 580 1385M610 1510Q640 1430 590 1385M545 1362Q560 1350 580 1360Q585 1330 610 1325Q620 1340 595 1362Q610 1375 600 1388L545 1365M700 1440Q740 1400 805 1395L832 1490M700 1440L775 1420L795 1510M790 1480L832 1475M855 1465Q900 1450 955 1467L915 1472L940 1500L890 1475L880 1510M855 1465L875 1510"/>
            <!-- stocking -->
            <path d="M1092 1310Q1085 1345 1120 1370Q1160 1405 1175 1393Q1160 1345 1120 1325Q1095 1320 1092 1310Q1110 1295 1155 1320L1185 1290Q1230 1280 1240 1335Q1220 1390 1175 1395M1185 1290Q1230 1235 1270 1245M1240 1340L1250 1325L1270 1345M1048 1510Q1100 1490 1150 1510"/>
          </g>

          <g transform="translate(840 552) scale(.3333 .352)">
            <circle class="s" cx="45" cy="51"/><circle class="s" cx="316" cy="81"/><circle class="s" cx="551" cy="118"/><circle class="s" cx="809" cy="47"/><circle class="s" cx="1157" cy="12"/><circle class="s" cx="342" cy="184"/><circle class="s" cx="209" cy="240"/><circle class="s" cx="69" cy="302"/><circle class="s" cx="958" cy="271"/><circle class="s" cx="1122" cy="255"/><circle class="s" cx="894" cy="490"/><circle class="s" cx="337" cy="519"/><circle class="s" cx="330" cy="604"/><circle class="s" cx="663" cy="625"/><circle class="s" cx="1163" cy="663"/><circle class="s" cx="404" cy="703"/><circle class="s" cx="218" cy="786"/><circle class="s" cx="711" cy="786"/><circle class="s" cx="544" cy="839"/><circle class="s" cx="1025" cy="918"/><circle class="s" cx="37" cy="951"/><circle class="s" cx="457" cy="1003"/><circle class="s" cx="758" cy="1030"/><circle class="s" cx="337" cy="1063"/><circle class="s" cx="415" cy="1067"/><circle class="s" cx="825" cy="1067"/><circle class="s" cx="148" cy="1091"/><circle class="s" cx="375" cy="1179"/><circle class="s" cx="528" cy="1216"/><circle class="s" cx="836" cy="1297"/><circle class="s" cx="955" cy="1324"/><circle class="s" cx="618" cy="1333"/><circle class="s" cx="1051" cy="1448"/>
            <circle class="m" cx="95" cy="219"/><circle class="m" cx="916" cy="423"/><circle class="m" cx="664" cy="460"/><circle class="m" cx="102" cy="537"/><circle class="m" cx="461" cy="789"/><circle class="m" cx="791" cy="777"/><circle class="m" cx="1030" cy="805"/><circle class="m" cx="695" cy="908"/><circle class="m" cx="359" cy="988"/><circle class="m" cx="582" cy="1093"/><circle class="m" cx="681" cy="1350"/><circle class="m" cx="193" cy="1494"/><circle class="m" cx="457" cy="1502"/><circle class="m" cx="400" cy="2"/>
            <circle class="l" cx="269" cy="553"/><circle class="l" cx="1231" cy="1037"/>
            <!-- rocket tail, paper plane, note -->
            <path d="M95-5Q120 60 205 130L250 100Q240 50 205-5M105 20V145Q110 160 130 155L165 105M240 55L290 42Q310 30 300 15L260-10M205 130L220 185Q225 200 240 190L270 170L250 105M225 120L250 170M235 115L265 165M250 105L300 135Q305 150 290 155L265 165M0 130L22 128L28 165L55 165L30 222L15 190L0 195M355 120Q350 112 365 105L478 52Q488 50 486 62L465 180Q460 195 450 185L420 150L450 97L405 138ZM600-5L590 60Q592 75 615 78L618 100Q625 105 635 98L660 90L715 100Q735 102 740 85L758-5M632 10L725 27M627 38L693 48"/>
            <!-- sun -->
            <ellipse cx="983" cy="85" rx="103" ry="101"/><path d="M932 68Q930 125 985 129Q1030 125 1037 87M835-5L885 50M850 0L905 18M885 88L813 118L890 127M908 160L890 235L945 183M983 187L1028 253L1027 180M1058 160L1128 185L1083 125M1085 90L1142 57L1077 45M1058 15L1065 0"/><circle class="dot" cx="973" cy="62"/><circle class="dot" cx="1002" cy="66"/>
            <ellipse cx="1221" cy="135" rx="40" ry="39"/><path d="M1182 138Q1160 145 1170 152L1185 150M1205 175L1192 195Q1200 210 1208 198L1217 177"/>
            <!-- mountains and house -->
            <path d="M25 474H587Q560 445 475 455Q390 420 305 474M25 474L162 292Q168 285 174 292L222 358L287 240Q292 232 297 240L340 328M112 360L145 348Q148 390 160 385Q172 380 172 350L215 350M240 325L275 312Q275 355 285 348Q297 340 298 308L330 318M375 370V440M537 370V450M330 345L425 288Q455 268 485 285L580 345Q595 360 585 375Q575 385 560 378L457 315L350 375Q330 385 320 370Q312 355 330 345M427 365H486V422H427ZM456 365V422M427 393H486M382 305V268H428V283M382 232H425Q440 238 440 250Q438 265 425 266H382Q367 262 367 250Q370 235 382 232"/>
            <!-- road -->
            <path d="M480 275Q530 150 670 148Q870 160 883 350Q880 410 855 460Q825 520 827 550Q840 640 930 641Q960 641 990 625M570 330Q600 252 673 250Q770 260 775 350Q770 385 750 425Q720 490 719 550Q730 740 930 747Q1070 735 1120 622M518 302L533 268M573 227Q600 208 635 202M692 202Q725 205 753 222M797 260Q820 285 827 312M831 368Q830 395 815 420M797 463Q782 490 780 515M779 573Q785 610 802 632M843 675Q870 692 900 693M950 687Q980 682 1002 667M1045 640L1062 625"/>
            <path d="M658 305Q615 315 618 355Q635 400 670 398Q710 390 717 347Q690 360 670 340Q655 325 658 305Z"/>
            <!-- palm island -->
            <path d="M883 573Q920 505 985 507Q1020 508 1040 530M883 573H975M948 617Q1000 525 1085 525Q1170 530 1225 617ZM1018 355Q1030 285 1058 287Q1085 300 1040 357Q1100 315 1113 332Q1120 365 1055 377Q1105 395 1090 412Q1070 420 1040 392Q1060 455 1035 458Q1010 455 1015 400Q985 460 965 448Q955 430 995 380Q940 380 940 348Q955 320 1018 355M1055 412Q1075 460 1073 520M1070 412Q1115 460 1113 522M1187 423Q1195 450 1228 455Q1200 465 1195 497Q1185 470 1152 462Q1180 450 1187 423Z"/>
            <path d="M1270 230Q1240 260 1190 275Q1160 290 1168 335Q1180 350 1200 362L1230 395Q1245 415 1270 420M1260 310Q1235 315 1236 350Q1245 375 1265 380M1260 490Q1240 510 1250 540Q1235 560 1245 575Q1245 600 1270 605"/>
            <!-- beanie, sparkle -->
            <path d="M382 628Q375 560 415 540M465 530Q525 540 530 600M380 632L530 602Q545 610 544 630Q535 640 520 642L395 667Q378 665 378 650ZM415 545L410 535L420 528L410 515L425 515L425 503L438 510L448 498L452 510L465 508L458 522L468 530L455 533L458 545L445 540L438 553L430 540ZM592 512Q600 540 637 545Q610 555 605 587Q590 558 558 555Q588 540 592 512Z"/>
            <!-- shrimp and fishing line -->
            <path d="M205 510Q175 570 220 600Q320 650 335 680Q355 735 310 752Q280 760 255 735L180 690Q160 675 175 655L212 640Q200 600 140 595Q50 600 25 670Q20 720 70 772L88 842L105 840Q150 825 160 800Q155 780 105 755Q90 720 105 690Q130 670 165 670M212 640L250 705L270 750M60 625Q65 675 100 700M30 655Q60 700 95 722M110 600Q95 640 120 680M140 597Q110 630 130 672M180 605Q130 630 140 668M33 710L95 722M75 775L105 758L155 800M78 780L110 830M115 678L120 695M130 675L135 697M142 675L150 695M270 750Q370 800 430 740L480 695Q500 680 540 680Q560 675 567 652M465 705Q460 730 475 738Q495 740 498 725Q490 705 465 705"/><circle class="dot" cx="250" cy="703"/>
            <!-- hammer, skateboard -->
            <path d="M527 712L548 707L565 763L545 770ZM552 728Q590 670 650 677Q700 690 708 725Q690 735 680 725Q660 720 652 745L655 775L678 862L635 873L612 782Q600 745 565 752M612 782L655 775M325 905Q285 890 290 850Q310 795 370 803Q390 810 410 825Q540 910 660 950Q720 965 712 1020Q690 1080 620 1060Q480 970 325 905M400 880Q410 855 435 862Q450 870 445 885L430 922Q415 930 395 920L388 905ZM385 895L435 910M402 878L440 895M582 970Q595 945 620 952Q632 960 628 975L612 1012Q598 1020 578 1010L572 995ZM568 988L620 1002M585 970L625 985"/>
            <!-- drum -->
            <path d="M740 868L885 782Q895 778 905 788L912 785L927 808L752 917L735 895ZM740 880L895 790M748 900L912 790M765 910Q800 970 850 977Q930 985 948 900Q945 860 915 812M808 885L897 962L868 845L945 905M808 885L830 970M865 980L908 1075L1013 1010L942 935M895 1045L988 988"/>
            <!-- surfboard -->
            <path d="M1270 675Q1080 720 1070 960Q1075 990 1100 977Q1220 940 1270 850M1090 960L1173 850L1195 857L1232 797L1190 768L1170 815L1138 800L1140 890M1215 777L1270 710"/>
            <!-- mushroom -->
            <path d="M130 890Q150 875 195 885Q265 920 260 980Q250 1000 230 980L130 890M145 935Q165 930 175 940Q185 955 165 960L205 975L200 960M160 955L95 1000Q85 1025 110 1040Q135 1050 150 1035L188 970M0 810L17 835L5 845L45 885Q40 895 0 905"/>
            <!-- astronaut -->
            <ellipse cx="250" cy="1148" rx="75" ry="72"/><path d="M175 1150Q185 1080 245 1078Q300 1090 298 1150Q290 1190 240 1188Q200 1185 178 1165M262 1115L280 1145M22 1105Q20 1085 35 1090Q45 1075 60 1085L52 1055Q55 1040 68 1048L75 1085L85 1050Q100 1040 95 1065L90 1095Q115 1115 105 1140Q75 1170 35 1145Q20 1125 22 1105M40 1100Q60 1105 60 1090M32 1150Q35 1240 75 1265L100 1268M92 1150Q110 1170 108 1205M0 1245Q50 1255 92 1290Q110 1200 155 1192M108 1188H190M280 1218Q350 1300 430 1220M265 1305Q350 1370 445 1300M285 1325Q230 1460 122 1412M210 1375Q50 1280 25 1320Q10 1400 28 1440L35 1485L0 1510M28 1440Q80 1455 120 1430M103 1363Q125 1410 120 1480L105 1510M430 1110Q440 1105 532 1102L502 1132L532 1158L437 1163M430 1110L440 1225Q425 1240 430 1275Q445 1300 475 1290Q495 1260 480 1240Q460 1220 440 1225M140 1220L200 1235Q225 1240 215 1265L200 1285Q170 1295 130 1265Q110 1245 140 1220M150 1232L145 1255L165 1262M172 1240L162 1272M178 1245Q200 1240 190 1258L175 1270L192 1278"/>
            <!-- planet -->
            <ellipse cx="726" cy="1192" rx="109" ry="106"/><circle class="m" cx="643" cy="1258"/><path d="M670 1148Q690 1190 725 1187Q755 1175 755 1145M812 1122Q880 1100 885 1110Q875 1150 670 1250M618 1230Q560 1270 568 1283Q590 1285 625 1275"/><circle class="dot" cx="698" cy="1129"/><circle class="dot" cx="719" cy="1124"/>
            <path d="M465 1315L490 1345L523 1318V1353L560 1355L535 1380L560 1405L522 1412V1443L495 1420L468 1443V1410L430 1405L455 1380L430 1357L465 1353ZM472 1372L480 1390L518 1378M290 1405Q325 1385 380 1410Q405 1425 390 1460Q380 1500 330 1510Q275 1510 272 1470ZM325 1510Q335 1455 385 1470M515 1510Q590 1385 655 1415Q680 1450 665 1510M590 1510Q620 1415 655 1425M950 1095L975 1103L968 1130L940 1122ZM880 1200L943 1215L930 1265L872 1250ZM903 1203Q900 1175 920 1178Q938 1190 928 1212"/>
            <!-- flower -->
            <circle class="m" cx="840" cy="1448"/><circle class="dot" cx="840" cy="1448"/><path d="M822 1430Q775 1390 778 1320Q830 1350 835 1425M850 1428Q840 1370 890 1315Q900 1380 862 1435M885 1423Q930 1375 1028 1387Q960 1430 885 1423M865 1445Q930 1440 977 1495Q900 1500 858 1460M815 1445Q730 1460 703 1402Q780 1395 825 1435M820 1455Q760 1450 710 1508M775 1510L830 1465M840 1470V1510M855 1468L885 1510M797 1362L820 1402M870 1362L857 1400M740 1413L790 1430M912 1410L955 1400M893 1465L935 1477M790 1470L750 1490"/>
            <!-- play, leaf, cactus -->
            <ellipse cx="1062" cy="1167" rx="70" ry="67"/><path d="M1038 1145L1088 1163L1050 1195ZM1055 1035Q1045 1020 1065 1000Q1085 1000 1090 1020L1115 1005Q1135 1015 1132 1028L1115 1045Q1130 1060 1115 1075Q1100 1075 1090 1060Q1065 1085 1055 1065L1070 1045ZM1155 1120Q1165 1095 1185 1103L1218 1133L1175 1180Q1155 1180 1162 1165L1190 1135L1175 1130Q1160 1140 1155 1120M1005 1300Q1010 1285 1025 1290V1275L1040 1285L1072 1265L1087 1305Q1085 1325 1070 1330L1030 1342L1025 1325L1010 1320Z"/>
            <path d="M1175 1355L1135 1310Q1120 1275 1155 1260Q1205 1260 1207 1300V1340M1200 1270Q1215 1235 1270 1245M1210 1325L1255 1328M1165 1420Q1160 1340 1215 1340Q1260 1350 1255 1420M1143 1420H1260M1143 1420L1158 1510H1260M1230 1465Q1245 1480 1270 1460M1230 1500L1260 1490M1170 1230L1165 1222M1183 1225V1218M1198 1232L1205 1225M1130 1365L1123 1360M1128 1380H1120M1130 1395L1123 1400"/><circle class="m" cx="1182" cy="1248"/><circle class="m" cx="1147" cy="1380"/>
          </g>
        </g>
        <symbol id="ticks" viewBox="0 0 32 22">
          <path d="M2 14L8 19L22 2M15 17L17 19L31 2" />
        </symbol>
        <symbol id="tail" viewBox="0 0 15 24">
          <path d="M3 0H15V24L1 5Q-1 0 3 0Z" />
        </symbol>
      </defs>
      <use href="#tile" x="-825" />
      <use href="#tile" />
      <use href="#tile" x="825" />
      <use href="#tile" x="1650" />
    </svg>

    <main class="chat">
      <section class="messages">
        <div class="group out">
          <div class="bubble">
            <p>iki aku ngecek rego disek ya<span class="meta"><time>10:46 AM</time><svg class="ticks"><use href="#ticks" /></svg></span></p>
          </div>
        </div>

        <div class="group in">
          <div class="bubble first">
            <svg class="tail"><use href="#tail" /></svg>
            <p>Iyooo<span class="meta"><time>10:47 AM</time></span></p>
          </div>
          <div class="bubble">
            <p>Miyako 1,5 juta<br>Oxone 3 Juta<span class="meta"><time>11:42 AM</time></span></p>
          </div>
        </div>

        <div class="group out">
          <div class="bubble first">
            <svg class="tail"><use href="#tail" /></svg>
            <p>wow<span class="meta"><time>11:42 AM</time><svg class="ticks"><use href="#ticks" /></svg></span></p>
          </div>
          <div class="row">
            <button class="react" type="button" aria-label="React">
              <svg viewBox="0 0 36 36">
                <circle class="face" cx="18" cy="18" r="15" />
                <circle cx="12" cy="14" r="2.5" />
                <circle cx="24" cy="14" r="2.5" />
                <path d="M10 21H26Q24 28 18 28T10 21Z" />
              </svg>
            </button>
            <div class="bubble">
              <p>kok larang<span class="meta"><time>11:42 AM</time><svg class="ticks"><use href="#ticks" /></svg></span></p>
            </div>
          </div>
          <div class="bubble">
            <p>ukuran 3kg<span class="meta"><time>11:42 AM</time><svg class="ticks"><use href="#ticks" /></svg></span></p>
          </div>
        </div>

        <div class="group in">
          <div class="bubble first">
            <svg class="tail"><use href="#tail" /></svg>
            <p>iku ndek toeng yo<span class="meta"><time>11:42 AM</time></span></p>
          </div>
          <div class="bubble">
            <p>gudk ndek sales<span class="meta"><time>11:43 AM</time></span></p>
          </div>
        </div>

        <div class="group out">
          <div class="bubble first">
            <svg class="tail"><use href="#tail" /></svg>
            <p>iki magicom kan<span class="meta"><time>11:43 AM</time><svg class="ticks"><use href="#ticks" /></svg></span></p>
          </div>
        </div>

        <div class="group in">
          <div class="bubble first">
            <svg class="tail"><use href="#tail" /></svg>
            <p>iyo ukurane 6 Liter<span class="meta"><time>11:43 AM</time></span></p>
          </div>
        </div>

        <div class="group out">
          <div class="bubble first">
            <svg class="tail"><use href="#tail" /></svg>
            <p>3jg<span class="meta"><time>11:43 AM</time><svg class="ticks"><use href="#ticks" /></svg></span></p>
          </div>
        </div>

        <div class="group in">
          <div class="bubble first">
            <svg class="tail"><use href="#tail" /></svg>
            <p>kg ambek liter bedo<span class="meta"><time>11:43 AM</time></span></p>
          </div>
          <div class="bubble">
            <p>1 liter itu = 1,8 kg<span class="meta"><time>11:43 AM</time></span></p>
          </div>
        </div>
      </section>
      <footer class="composer"></footer>
    </main>
  </body>
</html>
```
FILE: styles.css
```css
* {
  margin: 0;
  padding: 0;
  box-sizing: border-box;
}

body {
  display: grid;
  height: 100vh;
  overflow: hidden;
  background: #161717;
  color: #fafafa;
  font-family: Inter, "Liberation Sans", sans-serif;
  font-weight: 500;
}

.wallpaper,
.chat {
  grid-area: 1 / 1;
  width: 100%;
  height: 100vh;
}

.wallpaper {
  fill: none;
  stroke: #232525;
  stroke-width: 7px;
  stroke-linecap: round;
  stroke-linejoin: round;
}

.wallpaper .s {
  r: 12px;
}

.wallpaper .m {
  r: 21px;
}

.wallpaper .l {
  r: 30px;
}

.wallpaper .p {
  r: 17px;
}

.wallpaper .dot {
  r: 3px;
}

.chat {
  display: flex;
  flex-direction: column;
  position: relative;
  border-right: 2px solid #5c5e5d;
  overflow: hidden;
}

.messages {
  flex: 1;
  min-height: 0;
  display: flex;
  flex-direction: column;
  justify-content: flex-end;
  gap: 24px;
  padding: 0 114px 40px 33px;
}

.group {
  display: flex;
  flex-direction: column;
  align-items: flex-start;
  gap: 4px;
}

.group.out {
  align-items: flex-end;
}

.row {
  display: flex;
  align-items: center;
  gap: 12px;
}

.bubble {
  position: relative;
  padding: 13px 14px 15px 18px;
  border-radius: 15px;
  background: #242626;
}

.out .bubble {
  background: #264a38;
}

.in .first {
  border-top-left-radius: 0;
}

.out .first {
  border-top-right-radius: 0;
}

.bubble p {
  font-size: 27px;
  line-height: 38px;
  white-space: nowrap;
}

/* time hangs below the baseline of the last line */
.meta {
  display: inline-flex;
  align-items: center;
  gap: 8px;
  height: 22px;
  margin-left: 16px;
  margin-bottom: -12px;
  vertical-align: -12px;
  color: #a5a6a6;
  font-size: 22px;
  line-height: 22px;
}

.out .meta {
  color: #a6b6ae;
}

.ticks {
  width: 32px;
  height: 22px;
  fill: none;
  stroke: currentColor;
  stroke-width: 3px;
}

.tail {
  position: absolute;
  top: 0;
  left: -14px;
  width: 15px;
  height: 24px;
  fill: #242626;
}

.out .tail {
  left: auto;
  right: -14px;
  fill: #264a38;
  transform: scaleX(-1);
}

.react {
  display: flex;
  align-items: center;
  justify-content: center;
  width: 52px;
  height: 52px;
  border: none;
  border-radius: 50%;
  background: #161717;
  cursor: pointer;
}

.react svg {
  width: 36px;
  height: 36px;
  fill: #a5a6a6;
}

.react .face {
  fill: none;
  stroke: #a5a6a6;
  stroke-width: 3px;
}

/* only the top edge of the input bar is in view */
.composer {
  flex-shrink: 0;
  height: 96px;
  margin-right: 25px;
  margin-bottom: -76px;
  border-top-right-radius: 48px;
  background: #242626;
}
```
